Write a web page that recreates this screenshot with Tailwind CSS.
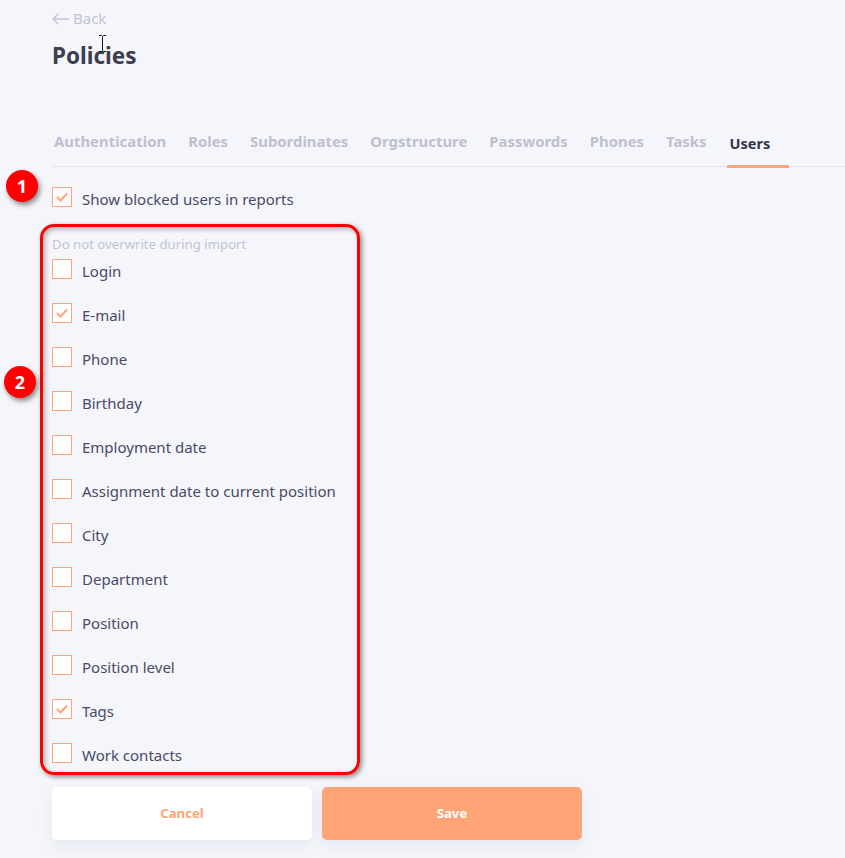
<!DOCTYPE html>
<html lang="en">
<head>
  <meta charset="UTF-8" />
  <title>Policies</title>
  <script src="https://cdn.jsdelivr.net/npm/@tailwindcss/browser@4"></script>
</head>
<body class="bg-[#f4f6fb] font-['Noto_Sans',sans-serif] text-[#4a4a66] h-[858px] w-[845px] overflow-hidden relative">
  <div class="pl-[52px] pt-[6px]">
    <!-- Back -->
    <div class="flex items-center gap-[4px] h-[24px] text-[15px] text-[#c3c3d5]">
      <svg class="mt-[2px]" width="17" height="12" viewBox="0 0 17 12" fill="none" stroke="#c3c3d5" stroke-width="1.3"><path d="M17 6H1M6.5 .8 1 6l5.5 5.2"/></svg>
      <span>Back</span>
    </div>
    <h1 class="mt-[10px] h-[32px] leading-[32px] text-[22.5px] font-bold text-[#3d3d50]">Policies</h1>

    <!-- Tabs -->
    <div class="mt-[51px] h-[44px] flex items-start border-b border-[#e3e4f0] text-[14.9px] font-bold text-[#bfbfce]">
      <span class="ml-[2px] mr-[22px] pt-[6px] leading-[24px]">Authentication</span>
      <span class="mr-[22px] pt-[6px] leading-[24px]">Roles</span>
      <span class="mr-[22px] pt-[6px] leading-[24px]">Subordinates</span>
      <span class="mr-[22px] pt-[6px] leading-[24px]">Orgstructure</span>
      <span class="mr-[22px] pt-[6px] leading-[24px]">Passwords</span>
      <span class="mr-[22px] pt-[6px] leading-[24px]">Phones</span>
      <span class="mr-[20px] pt-[6px] leading-[24px]">Tasks</span>
      <span class="h-[45px] pl-[3px] pr-[19px] pt-[8px] leading-[24px] text-[14.5px] text-[#33334a] border-b-[3px] border-[#ffa477]">Users</span>
    </div>

    <!-- Show blocked -->
    <label class="mt-[20px] flex gap-[10px] h-[24px] text-[15px]">
      <span class="w-[20px] h-[20px] bg-white/60 border border-[#ffa477] flex items-center justify-center">
        <svg width="12" height="10" viewBox="0 0 12 10" fill="none" stroke="#ffa477" stroke-width="2"><path d="M1 5l3.5 3.5L11 1.5"/></svg>
      </span>
      <span class="leading-[24px]">Show blocked users in reports</span>
    </label>

    <div class="mt-[23px] h-[20px] leading-[20px] text-[13.2px] text-[#c3c3d5]">Do not overwrite during import</div>

    <!-- Import fields -->
    <div class="mt-[5px] flex flex-col gap-[20px] text-[15px]">
      <label class="flex gap-[10px] h-[24px]"><span class="w-[20px] h-[20px] bg-white border border-[#ffa477]"></span><span class="leading-[24px]">Login</span></label>
      <label class="flex gap-[10px] h-[24px]"><span class="w-[20px] h-[20px] bg-white border border-[#ffa477] flex items-center justify-center"><svg width="12" height="10" viewBox="0 0 12 10" fill="none" stroke="#ffa477" stroke-width="2"><path d="M1 5l3.5 3.5L11 1.5"/></svg></span><span class="leading-[24px]">E-mail</span></label>
      <label class="flex gap-[10px] h-[24px]"><span class="w-[20px] h-[20px] bg-white border border-[#ffa477]"></span><span class="leading-[24px]">Phone</span></label>
      <label class="flex gap-[10px] h-[24px]"><span class="w-[20px] h-[20px] bg-white border border-[#ffa477]"></span><span class="leading-[24px]">Birthday</span></label>
      <label class="flex gap-[10px] h-[24px]"><span class="w-[20px] h-[20px] bg-white border border-[#ffa477]"></span><span class="leading-[24px]">Employment date</span></label>
      <label class="flex gap-[10px] h-[24px]"><span class="w-[20px] h-[20px] bg-white border border-[#ffa477]"></span><span class="leading-[24px]">Assignment date to current position</span></label>
      <label class="flex gap-[10px] h-[24px]"><span class="w-[20px] h-[20px] bg-white border border-[#ffa477]"></span><span class="leading-[24px]">City</span></label>
      <label class="flex gap-[10px] h-[24px]"><span class="w-[20px] h-[20px] bg-white border border-[#ffa477]"></span><span class="leading-[24px]">Department</span></label>
      <label class="flex gap-[10px] h-[24px]"><span class="w-[20px] h-[20px] bg-white border border-[#ffa477]"></span><span class="leading-[24px]">Position</span></label>
      <label class="flex gap-[10px] h-[24px]"><span class="w-[20px] h-[20px] bg-white border border-[#ffa477]"></span><span class="leading-[24px]">Position level</span></label>
      <label class="flex gap-[10px] h-[24px]"><span class="w-[20px] h-[20px] bg-white border border-[#ffa477] flex items-center justify-center"><svg width="12" height="10" viewBox="0 0 12 10" fill="none" stroke="#ffa477" stroke-width="2"><path d="M1 5l3.5 3.5L11 1.5"/></svg></span><span class="leading-[24px]">Tags</span></label>
      <label class="flex gap-[10px] h-[24px]"><span class="w-[20px] h-[20px] bg-white border border-[#ffa477]"></span><span class="leading-[24px]">Work contacts</span></label>
    </div>

    <!-- Buttons -->
    <div class="mt-[20px] flex gap-[10px] text-[13.2px] font-bold">
      <button class="w-[260px] h-[53px] pt-[1px] rounded-[5px] bg-white text-[#ffa477] shadow-[0_6px_16px_rgba(80,80,130,0.08)]">Cancel</button>
      <button class="w-[260px] h-[53px] pt-[1px] rounded-[5px] bg-[#ffa477] text-white shadow-[0_6px_16px_rgba(80,80,130,0.08)]">Save</button>
    </div>
  </div>

  <!-- Annotations -->
  <div class="absolute left-[40px] top-[224px] w-[320px] h-[551px] rounded-[14px] border-[3px] border-[#ff0000] shadow-[2px_2px_5px_rgba(0,0,0,0.45),inset_2px_2px_5px_rgba(0,0,0,0.3)]"></div>
  <div class="absolute left-[6px] top-[170px] w-[32px] h-[32px] rounded-full bg-[#ff0000] text-white font-bold text-[18px] leading-[32px] text-center shadow-[2px_3px_5px_rgba(0,0,0,0.45)]">1</div>
  <div class="absolute left-[4px] top-[366px] w-[32px] h-[32px] rounded-full bg-[#ff0000] text-white font-bold text-[18px] leading-[32px] text-center shadow-[2px_3px_5px_rgba(0,0,0,0.45)]">2</div>

  <!-- Text cursor -->
  <svg class="absolute left-[98px] top-[35px]" width="9" height="17" viewBox="0 0 9 17" fill="none" stroke="#111" stroke-width="1"><path d="M1 .5h2.5l1 1 1-1H8M4.5 1.5v14M1 16.5h2.5l1-1 1 1H8"/></svg>
</body>
</html>
